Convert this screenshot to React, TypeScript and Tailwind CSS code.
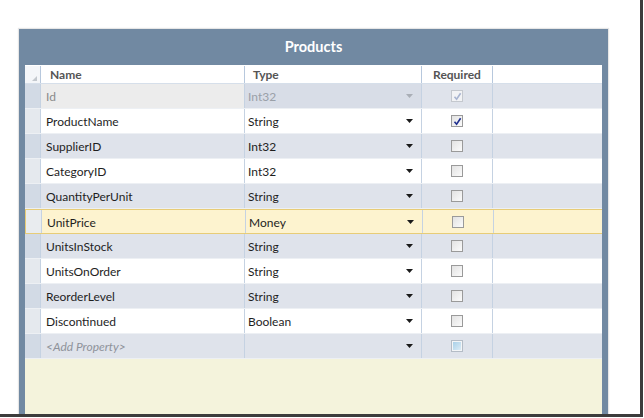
import React from "react";

type Row = {
  name: string;
  type: string;
  required?: boolean;
  kind?: "key" | "selected" | "new";
};

const rows: Row[] = [
  { name: "Id", type: "Int32", required: true, kind: "key" },
  { name: "ProductName", type: "String", required: true },
  { name: "SupplierID", type: "Int32" },
  { name: "CategoryID", type: "Int32" },
  { name: "QuantityPerUnit", type: "String" },
  { name: "UnitPrice", type: "Money", kind: "selected" },
  { name: "UnitsInStock", type: "String" },
  { name: "UnitsOnOrder", type: "String" },
  { name: "ReorderLevel", type: "String" },
  { name: "Discontinued", type: "Boolean" },
  { name: "<Add Property>", type: "", kind: "new" },
];

function Arrow({ muted }: { muted?: boolean }) {
  return (
    <svg width="7" height="4" viewBox="0 0 7 4" aria-hidden>
      <path d="M0 0h7L3.5 4z" fill={muted ? "#a9aeb6" : "#1a1a1a"} />
    </svg>
  );
}

function CheckBox({ checked, disabled, pending }: { checked?: boolean; disabled?: boolean; pending?: boolean }) {
  return (
    <span
      className={
        "flex h-[12px] w-[12px] items-center justify-center border " +
        (disabled
          ? "border-[#c4c8ce] bg-[#f2f3f5]"
          : pending
            ? "border-[#b4bcc6] bg-[#f3f5f7]"
            : "border-[#9a9a9a] bg-gradient-to-br from-[#e2e2e2] to-[#fbfbfb]")
      }
    >
      {pending ? <span className="h-[8px] w-[8px] bg-gradient-to-br from-[#a9d0e8] to-[#dcecf6]" /> : null}
      {checked ? (
        <svg width="9" height="9" viewBox="0 0 9 9" aria-hidden>
          <path
            d="M1.5 4.8L3.6 7.2L7.6 1.2"
            fill="none"
            stroke={disabled ? "#a8b4d0" : "#1f2f8f"}
            strokeWidth="1.6"
          />
        </svg>
      ) : null}
    </span>
  );
}

export default function App() {
  return (
    <div className="h-[418px] w-[644px] overflow-hidden bg-white font-['Lato','Liberation_Sans',sans-serif]">
      <div className="h-[417px] w-[643px] overflow-hidden border-b-[3px] border-r-[3px] border-[#3c3c3c] bg-white pl-[19px] pt-[29px]">
        <div className="flex h-[400px] w-[589px] flex-col bg-[#7189a2] px-[6px] shadow-[0_0_1px_1px_#e6e6e6]">
          <div className="flex h-[36px] shrink-0 items-center justify-center text-[14.5px] font-bold text-white">
            Products
          </div>

          <div className="flex h-[19px] shrink-0 border-b border-[#d6dfea] bg-white pt-[1px] text-[12px] font-bold text-[#555]">
            <div className="relative w-[16px] border-r border-[#b7c8dd] bg-[#f4f6f9]">
              <svg className="absolute bottom-[2px] right-[3px]" width="5" height="5" viewBox="0 0 5 5" aria-hidden>
                <path d="M5 0V5H0z" fill="#c3c8ce" />
              </svg>
            </div>
            <div className="flex w-[204px] items-center border-r border-[#b7c8dd] pl-[9px]">Name</div>
            <div className="flex w-[177px] items-center border-r border-[#b7c8dd] pl-[8px]">Type</div>
            <div className="flex w-[71px] items-center justify-center border-r border-[#b7c8dd]">Required</div>
            <div className="flex-1" />
          </div>

          {rows.map((row, i) => {
            const alt = i % 2 === 0;
            const selected = row.kind === "selected";
            const rowBg = selected ? "bg-[#fdf3cf]" : alt ? "bg-[#dfe3eb]" : "bg-white";
            const headBg = selected ? "bg-[#e9ecef]" : alt ? "bg-[#d2dae5]" : "bg-[#e5e9ee]";
            return (
              <div
                key={row.name}
                className={
                  "flex h-[25px] shrink-0 text-[12px] text-[#1e1e1e] " +
                  rowBg +
                  (selected ? " border-y border-l border-[#e7cc77]" : " border-b border-[#edf0f4]")
                }
              >
                <div className={"w-[16px] border-r border-[#c5d2e2] " + headBg} />
                <div
                  className={
                    "flex w-[204px] items-center border-r border-[#c5d2e2] pl-[5px] pt-[2px] " +
                    (row.kind === "key" ? "bg-[#ececec] text-[#8a8a8a]" : "") +
                    (row.kind === "new" ? " italic text-[#8e929a]" : "")
                  }
                >
                  {row.name}
                </div>
                <div
                  className={
                    "flex w-[177px] items-center justify-between border-r border-[#c5d2e2] pl-[3px] pr-[8px] " +
                    (row.kind === "key" ? "bg-[#d8dde7] text-[#9aa0a8]" : "")
                  }
                >
                  <span className="pt-[2px]">{row.type}</span>
                  <Arrow muted={row.kind === "key"} />
                </div>
                <div className="flex w-[71px] items-center justify-center border-r border-[#c5d2e2]">
                  <CheckBox
                    checked={row.required}
                    disabled={row.kind === "key"}
                    pending={row.kind === "new"}
                  />
                </div>
                <div className="flex-1" />
              </div>
            );
          })}

          <div className="flex-1 bg-[#f4f3dc]" />
        </div>
      </div>
    </div>
  );
}
